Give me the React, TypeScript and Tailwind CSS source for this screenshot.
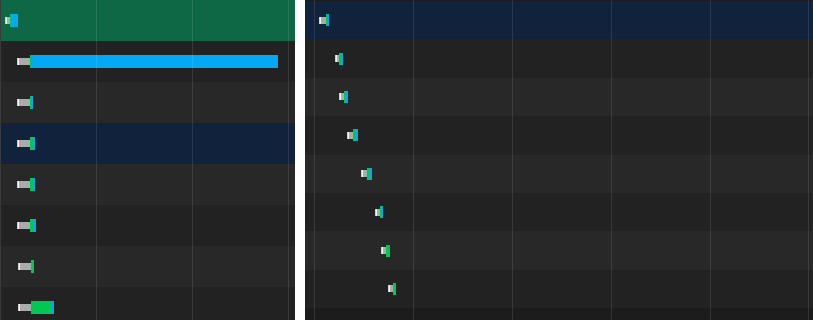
import React from 'react'

type Bar = [number, number, number, number] // gray start, gray end / green start, green end / blue start, blue end

const leftRows: { bg: string; bar: Bar }[] = [
  { bg: 'bg-[#0f6845]', bar: [5, 10, 12, 18] },
  { bg: 'bg-[#222222]', bar: [17, 30, 32, 278] },
  { bg: 'bg-[#282828]', bar: [17, 30, 32, 33] },
  { bg: 'bg-[#11223c]', bar: [17, 30, 33, 35] },
  { bg: 'bg-[#282828]', bar: [17, 30, 33, 35] },
  { bg: 'bg-[#222222]', bar: [17, 30, 34, 36] },
  { bg: 'bg-[#282828]', bar: [18, 31, 33, 34] },
  { bg: 'bg-[#222222]', bar: [18, 31, 52, 54] },
]

// x relative to the right panel (panel starts at 305)
const rightRows: { bg: string; bar: Bar }[] = [
  { bg: 'bg-[#11223c]', bar: [14, 21, 23, 24] },
  { bg: 'bg-[#222222]', bar: [30, 34, 36, 38] },
  { bg: 'bg-[#282828]', bar: [34, 39, 41, 43] },
  { bg: 'bg-[#222222]', bar: [42, 48, 51, 53] },
  { bg: 'bg-[#282828]', bar: [56, 62, 65, 67] },
  { bg: 'bg-[#222222]', bar: [70, 75, 76, 78] },
  { bg: 'bg-[#282828]', bar: [76, 81, 84, 85] },
  { bg: 'bg-[#222222]', bar: [83, 88, 90, 91] },
]

function Timing({ bar, tall }: { bar: Bar; tall: string }) {
  const [a, b, c, d] = bar
  return (
    <div className="flex items-center" style={{ marginLeft: a }}>
      <div className="flex h-[7px]" style={{ width: b - a }}>
        <span className="w-px bg-[#cfcfcf]" />
        <span className="w-px bg-[#f4f4f4]" />
        <span className="flex-1 bg-[#ababab]" />
      </div>
      <div className={`${tall} bg-[#00c853]`} style={{ width: c - b }} />
      <div className={`${tall} bg-[#03a9f4]`} style={{ width: d - c }} />
    </div>
  )
}

export default function App() {
  return (
    <div className="w-[813px] h-[320px] flex bg-white overflow-hidden">
      {/* Left waterfall */}
      <div className="relative w-[295px] shrink-0 h-full flex flex-col overflow-hidden">
        {leftRows.map((r, i) => (
          <div key={i} className={`h-[41px] shrink-0 flex items-center ${r.bg}`}>
            <Timing bar={r.bar} tall="h-[13px]" />
          </div>
        ))}
        {[96, 192, 288].map(x => (
          <div key={x} className="absolute top-0 bottom-0 w-px bg-white/10" style={{ left: x }} />
        ))}
        <div className="absolute top-0 bottom-0 left-0 w-px bg-[#3a3a3a]" />
      </div>

      {/* Right waterfall */}
      <div className="relative ml-[10px] flex-1 h-full flex flex-col pt-px bg-[#1c1c1c] overflow-hidden">
        {rightRows.map((r, i) => (
          <div key={i} className={`h-[38.4px] shrink-0 flex items-center ${r.bg}`}>
            <Timing bar={r.bar} tall="h-[12px]" />
          </div>
        ))}
        {[9, 108, 207, 306, 405, 503].map(x => (
          <div key={x} className="absolute top-0 bottom-0 w-px bg-white/10" style={{ left: x }} />
        ))}
      </div>
    </div>
  )
}
